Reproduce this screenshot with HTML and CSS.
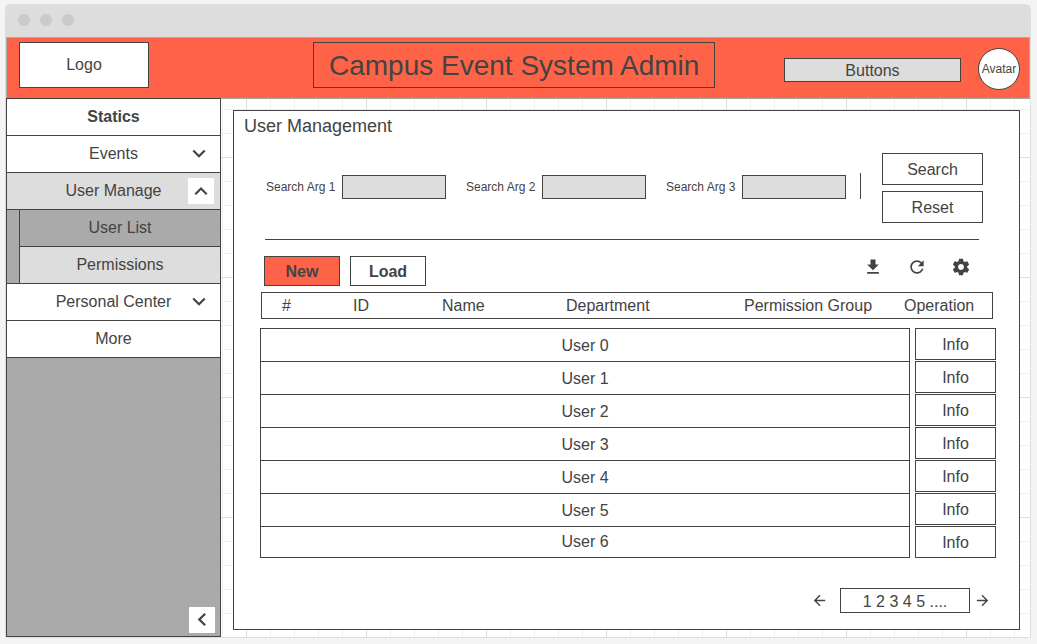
FILE: index.html
```html
<!DOCTYPE html>
<html lang="en">
<head>
<meta charset="utf-8">
<title>Campus Event System Admin</title>
<link rel="stylesheet" href="styles.css">
</head>
<body>
<div class="window">
  <div class="titlebar"><span class="dot"></span><span class="dot"></span><span class="dot"></span></div>
  <header class="header">
    <a class="logo" href="#">Logo</a>
    <h1 class="brand">Campus Event System Admin</h1>
    <div class="account">
      <button class="header-button" type="button">Buttons</button>
      <a class="avatar" href="#">Avatar</a>
    </div>
  </header>
  <div class="main">
    <nav class="sidebar">
      <ul class="menu">
        <li class="menu-item"><a class="menu-link strong" href="#">Statics</a></li>
        <li class="menu-item"><a class="menu-link" href="#">Events</a>
          <button class="toggle" type="button" aria-label="Expand Events"><svg class="chevron" viewBox="0 0 24 24"><path d="M16.59 8.09L12 12.67 7.41 8.09 6 9.5l6 6 6-6z"/></svg></button></li>
        <li class="menu-item open"><a class="menu-link" href="#">User Manage</a>
          <button class="toggle boxed" type="button" aria-label="Collapse User Manage"><svg class="chevron" viewBox="0 0 24 24"><path d="M12 8.3l-6 6 1.41 1.41L12 11.13l4.59 4.58L18 14.3z"/></svg></button></li>
        <li class="submenu-wrap">
          <ul class="submenu">
            <li class="menu-item current"><a class="menu-link" href="#">User List</a></li>
            <li class="menu-item open"><a class="menu-link" href="#">Permissions</a></li>
          </ul>
        </li>
        <li class="menu-item"><a class="menu-link" href="#">Personal Center</a>
          <button class="toggle" type="button" aria-label="Expand Personal Center"><svg class="chevron" viewBox="0 0 24 24"><path d="M16.59 8.09L12 12.67 7.41 8.09 6 9.5l6 6 6-6z"/></svg></button></li>
        <li class="menu-item last"><a class="menu-link" href="#">More</a></li>
      </ul>
      <button class="collapse" type="button" aria-label="Collapse sidebar"><svg class="chevron" viewBox="0 0 24 24"><path d="M15.61 7.01L14.2 5.6 8 11.6l6.2 6 1.41-1.41L11.02 11.6z"/></svg></button>
    </nav>
    <main class="canvas">
      <section class="panel">
        <h2 class="panel-title">User Management</h2>
        <form class="search">
          <div class="field"><label class="field-label" for="arg1">Search Arg 1</label><input class="field-input" id="arg1" type="text"></div>
          <div class="field"><label class="field-label" for="arg2">Search Arg 2</label><input class="field-input" id="arg2" type="text"></div>
          <div class="field"><label class="field-label" for="arg3">Search Arg 3</label><input class="field-input" id="arg3" type="text"></div>
          <div class="search-actions">
            <button class="button" type="submit">Search</button>
            <button class="button" type="reset">Reset</button>
          </div>
        </form>
        <hr class="rule">
        <div class="toolbar">
          <button class="tool primary" type="button">New</button>
          <button class="tool" type="button">Load</button>
          <div class="icons">
            <button class="icon-button" type="button" aria-label="Download"><svg class="icon" viewBox="0 0 24 24"><path d="M19 9h-4V3H9v6H5l7 7 7-7zM5 18v2h14v-2H5z"/></svg></button>
            <button class="icon-button" type="button" aria-label="Refresh"><svg class="icon" viewBox="0 0 24 24"><path d="M17.65 6.35C16.2 4.9 14.21 4 12 4c-4.42 0-7.99 3.58-7.99 8s3.57 8 7.99 8c3.73 0 6.84-2.55 7.73-6h-2.08c-.82 2.33-3.04 4-5.65 4-3.31 0-6-2.69-6-6s2.69-6 6-6c1.66 0 3.14.69 4.22 1.78L13 11h7V4l-2.35 2.35z"/></svg></button>
            <button class="icon-button" type="button" aria-label="Settings"><svg class="icon" viewBox="0 0 24 24"><path d="M19.43 12.98c.04-.32.07-.64.07-.98s-.03-.66-.07-.98l2.11-1.65c.19-.15.24-.42.12-.64l-2-3.46c-.12-.22-.39-.3-.61-.22l-2.49 1c-.52-.4-1.08-.73-1.69-.98l-.38-2.65C14.46 2.18 14.25 2 14 2h-4c-.25 0-.46.18-.49.42l-.38 2.65c-.61.25-1.17.59-1.69.98l-2.49-1c-.23-.09-.49 0-.61.22l-2 3.46c-.13.22-.07.49.12.64l2.11 1.65c-.04.32-.07.65-.07.98s.03.66.07.98l-2.11 1.65c-.19.15-.24.42-.12.64l2 3.46c.12.22.39.3.61.22l2.49-1c.52.4 1.08.73 1.69.98l.38 2.65c.03.24.24.42.49.42h4c.25 0 .46-.18.49-.42l.38-2.65c.61-.25 1.17-.59 1.69-.98l2.49 1c.23.09.49 0 .61-.22l2-3.46c.12-.22.07-.49-.12-.64l-2.11-1.65zM12 15.5c-1.93 0-3.5-1.57-3.5-3.5s1.57-3.5 3.5-3.5 3.5 1.57 3.5 3.5-1.57 3.5-3.5 3.5z"/></svg></button>
          </div>
        </div>
        <table class="users">
          <thead class="users-head">
            <tr class="head-row"><th>#</th><th>ID</th><th>Name</th><th>Department</th><th>Permission Group</th><th>Operation</th></tr>
          </thead>
          <tbody class="users-body">
            <tr class="user-row"><td class="user" colspan="5">User 0</td><td class="operation"><button class="button" type="button">Info</button></td></tr>
            <tr class="user-row"><td class="user" colspan="5">User 1</td><td class="operation"><button class="button" type="button">Info</button></td></tr>
            <tr class="user-row"><td class="user" colspan="5">User 2</td><td class="operation"><button class="button" type="button">Info</button></td></tr>
            <tr class="user-row"><td class="user" colspan="5">User 3</td><td class="operation"><button class="button" type="button">Info</button></td></tr>
            <tr class="user-row"><td class="user" colspan="5">User 4</td><td class="operation"><button class="button" type="button">Info</button></td></tr>
            <tr class="user-row"><td class="user" colspan="5">User 5</td><td class="operation"><button class="button" type="button">Info</button></td></tr>
            <tr class="user-row"><td class="user" colspan="5">User 6</td><td class="operation"><button class="button" type="button">Info</button></td></tr>
          </tbody>
        </table>
        <nav class="pager" aria-label="Pages">
          <a class="arrow" href="#" aria-label="Previous page"><svg class="arrow-icon" viewBox="0 0 24 24"><path d="M20 11H7.83l5.59-5.59L12 4l-8 8 8 8 1.41-1.41L7.83 13H20v-2z"/></svg></a>
          <div class="pages"><a href="#">1</a> <a href="#">2</a> <a href="#">3</a> <a href="#">4</a> <a href="#">5</a> ....</div>
          <a class="arrow" href="#" aria-label="Next page"><svg class="arrow-icon" viewBox="0 0 24 24"><path d="M12 4l-1.41 1.41L16.17 11H4v2h12.17l-5.58 5.59L12 20l8-8z"/></svg></a>
        </nav>
      </section>
    </main>
  </div>
</div>
</body>
</html>
```
FILE: styles.css
```css
:root {
  --ink: #434343;
  --tomato: #ff6347;
  --light: #ddd;
  --mid: #aaa;
}

* {
  box-sizing: border-box;
}

body {
  display: flex;
  min-height: 100vh;
  margin: 0;
  padding: 4px 6px 6px 5px;
  background: #f4f4f4;
  color: var(--ink);
  font: 16px/20px "Liberation Sans", Arial, sans-serif;
}

a {
  color: inherit;
  text-decoration: none;
}

button {
  padding: 0;
  border: 0;
  background: none;
  color: inherit;
  font: inherit;
}

svg {
  display: block;
  fill: currentColor;
}

ul {
  margin: 0;
  padding: 0;
  list-style: none;
}

.window {
  display: flex;
  flex: 1;
  flex-direction: column;
  min-width: 0;
  border: 1px solid var(--light);
  border-radius: 6px 6px 0 0;
  background: #fff;
}

.titlebar {
  display: flex;
  gap: 10px;
  height: 32px;
  padding: 9px 12px;
  background: var(--light);
}

.dot {
  width: 12px;
  height: 12px;
  border-radius: 50%;
  background: #cacaca;
}

.header {
  display: flex;
  align-items: flex-start;
  min-height: 62px;
  padding: 4px 9px 4px 12px;
  border: 1px solid var(--mid);
  background: var(--tomato);
}

.logo,
.brand {
  display: flex;
  align-items: center;
  justify-content: center;
  height: 46px;
  border: 1px solid var(--ink);
}

.logo {
  width: 130px;
  background: #fff;
}

.brand {
  margin: 0 0 0 164px;
  padding: 2px 15px 0;
  font-size: 28px;
  font-weight: 400;
  white-space: nowrap;
}

.account {
  display: flex;
  align-items: center;
  gap: 17px;
  margin-left: auto;
  padding-top: 6px;
}

.header-button {
  width: 177px;
  height: 24px;
  margin-top: 2px;
  padding-top: 2px;
  border: 1px solid var(--ink);
  background: var(--light);
}

.avatar {
  display: flex;
  align-items: center;
  justify-content: center;
  width: 42px;
  height: 42px;
  border: 1px solid var(--ink);
  border-radius: 50%;
  background: #fff;
  font-size: 12px;
}

.main {
  display: flex;
  flex: 1;
}

.sidebar {
  display: flex;
  flex-direction: column;
  flex: none;
  width: 215px;
  margin-top: -1px;
  border: solid var(--ink);
  border-width: 0 1px 1px;
  background: var(--mid);
}

.menu-item {
  display: flex;
  position: relative;
  height: 37px;
  border-top: 1px solid var(--ink);
  background: #fff;
}

.menu-item.open {
  background: var(--light);
}

.menu-item.current {
  background: var(--mid);
}

.menu-item.last {
  height: 38px;
  border-bottom: 1px solid var(--ink);
}

.menu-link {
  flex: 1;
  padding: 8px 0;
  text-align: center;
}

.strong {
  font-weight: 700;
}

.submenu-wrap {
  padding-left: 12px;
  border-top: 1px solid var(--ink);
}

.submenu {
  border-left: 1px solid var(--ink);
}

.submenu .menu-item:first-child {
  height: 36px;
  border-top: 0;
}

.toggle {
  position: absolute;
  top: 5px;
  right: 8px;
  width: 26px;
  height: 26px;
}

.toggle.boxed {
  right: 6px;
}

.boxed,
.collapse {
  background: #fff;
}

.collapse {
  align-self: flex-end;
  width: 26px;
  height: 26px;
  margin: auto 5px 3px 0;
}

.chevron {
  width: 26px;
  height: 26px;
}

.canvas {
  display: flex;
  flex: 1;
  min-width: 0;
  padding: 11px 10px 7px 12px;
  background-color: #fff;
  background-image:
    linear-gradient(90deg, #ddd 1px, transparent 1px),
    linear-gradient(#ddd 1px, transparent 1px),
    linear-gradient(90deg, #eee 1px, transparent 1px),
    linear-gradient(#eee 1px, transparent 1px);
  background-position: 25px 0, 0 58px, 25px 0, 0 10px;
  background-size: 120px 120px, 120px 120px, 24px 24px, 24px 24px;
}

.panel {
  flex: 1;
  min-width: 0;
  border: 1px solid var(--ink);
  background: #fff;
}

.panel-title {
  margin: 5px 10px 17px;
  font-size: 18px;
  font-weight: 400;
}

.search {
  display: flex;
  align-items: center;
  gap: 20px;
  padding: 0 36px 0 32px;
}

.field {
  display: flex;
  flex: 1;
  align-items: center;
  min-width: 0;
  padding-bottom: 2px;
}

.field-label {
  flex: none;
  width: 76px;
  font-size: 12px;
}

.field-input {
  flex: 1;
  min-width: 0;
  height: 24px;
  padding: 0 6px;
  border: 1px solid var(--ink);
  border-radius: 0;
  background: var(--light);
  color: inherit;
  font: inherit;
}

.search-actions {
  display: grid;
  flex: none;
  gap: 6px;
  position: relative;
  width: 117px;
  padding-left: 16px;
}

.search-actions::before {
  content: "";
  position: absolute;
  top: 20px;
  left: -6px;
  height: 26px;
  border-left: 1px solid var(--ink);
}

.button {
  width: 100%;
  height: 32px;
  padding-top: 2px;
  border: 1px solid var(--ink);
  background: #fff;
}

.rule {
  margin: 16px 40px 16px 31px;
  border: 0;
  border-top: 1px solid var(--ink);
}

.toolbar {
  display: flex;
  gap: 10px;
  padding: 0 48px 0 30px;
}

.tool {
  width: 76px;
  height: 30px;
  padding-top: 2px;
  border: 1px solid var(--ink);
  background: #fff;
  font-weight: 700;
}

.tool.primary {
  background: var(--tomato);
}

.icons {
  display: flex;
  gap: 24px;
  align-items: flex-start;
  margin-left: auto;
  padding-top: 1px;
}

.icon,
.icon-button {
  width: 20px;
  height: 20px;
}

.users {
  display: block;
  margin: 6px 23px 0 26px;
}

.users-head,
.users-body {
  display: block;
}

.head-row {
  display: grid;
  grid-template-columns: 71fr 89fr 124fr 178fr 160fr 88fr;
  height: 27px;
  margin: 0 3px 9px 1px;
  padding: 3px 0 3px 20px;
  border: 1px solid var(--ink);
}

.head-row th {
  padding: 0;
  font-weight: 400;
  text-align: left;
  white-space: nowrap;
}

.user-row {
  display: grid;
  grid-template-columns: 1fr 81px;
  column-gap: 5px;
  height: 33px;
}

.user {
  padding: 7px 0 5px;
  border: solid var(--ink);
  border-width: 1px 1px 0;
  text-align: center;
}

.operation {
  padding: 0;
}

.user-row:last-child {
  height: 32px;
}

.user-row:last-child .user {
  padding: 5px 0;
  border-bottom-width: 1px;
}

.operation .button {
  display: block;
}

.pager {
  display: flex;
  align-items: center;
  justify-content: flex-end;
  gap: 4px;
  margin: 30px 29px 16px;
}

.arrow-icon {
  width: 17px;
  height: 17px;
}

.arrow:first-child {
  margin-right: 8px;
}

.arrow:last-child {
  margin-right: -1px;
}

.pages {
  width: 130px;
  height: 25px;
  padding-top: 3px;
  border: 1px solid var(--ink);
  text-align: center;
}
```
